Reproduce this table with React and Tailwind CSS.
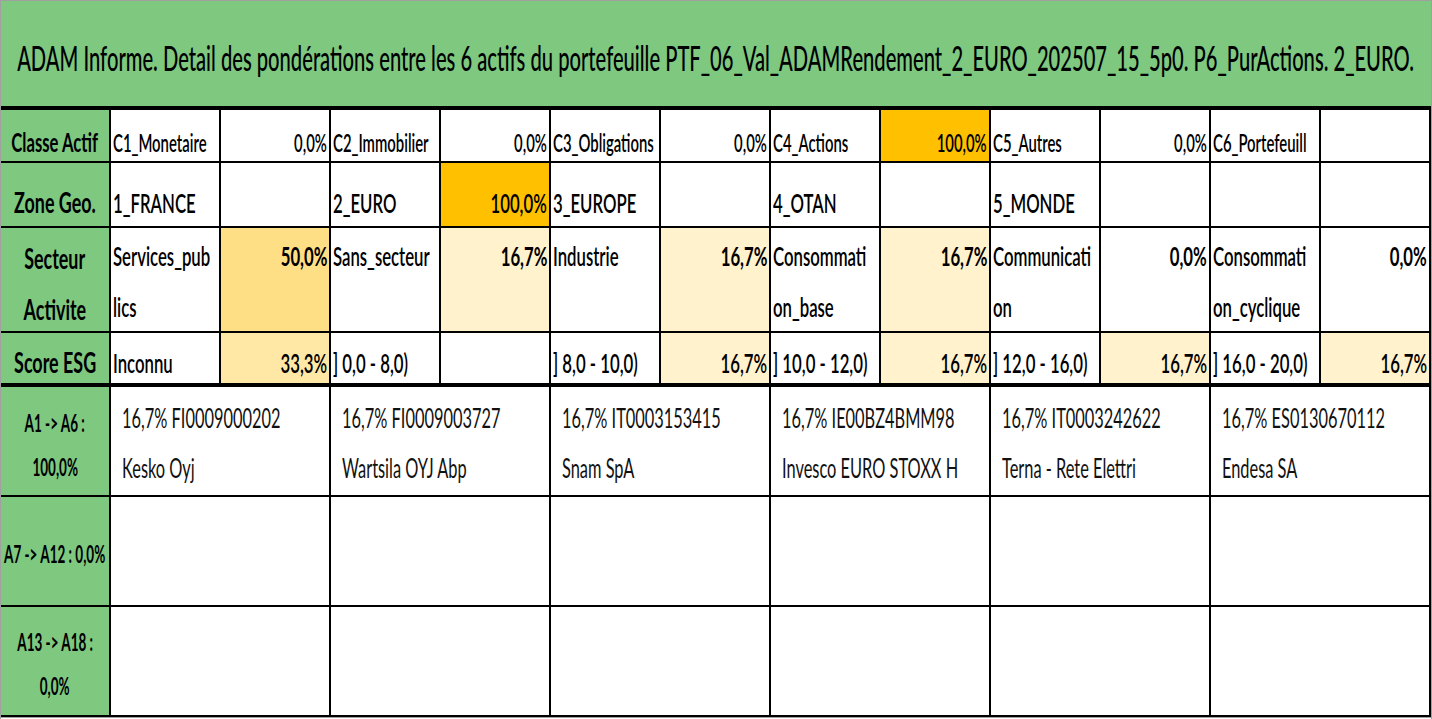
import React from "react";

const GREEN = "bg-[#7ec880]";

function T({ children, align = "left", sx = "scale-x-[0.62]", className = "" }) {
  const origin =
    align === "right" ? "origin-right" : align === "center" ? "origin-center" : "origin-left";
  return (
    <span className={`inline-block whitespace-nowrap ${sx} ${origin} ${className}`}>
      {children}
    </span>
  );
}

const classes = [
  ["C1_Monetaire", "0,0%", ""],
  ["C2_Immobilier", "0,0%", ""],
  ["C3_Obligations", "0,0%", ""],
  ["C4_Actions", "100,0%", "bg-[#ffc000]"],
  ["C5_Autres", "0,0%", ""],
  ["C6_Portefeuill", "", ""],
];

const zones = [
  ["1_FRANCE", "", ""],
  ["2_EURO", "100,0%", "bg-[#ffc000]"],
  ["3_EUROPE", "", ""],
  ["4_OTAN", "", ""],
  ["5_MONDE", "", ""],
  ["", "", ""],
];

const secteurs = [
  [["Services_pub", "lics"], "50,0%", "bg-[#ffdf85]"],
  [["Sans_secteur"], "16,7%", "bg-[#fff2cd]"],
  [["Industrie"], "16,7%", "bg-[#fff2cd]"],
  [["Consommati", "on_base"], "16,7%", "bg-[#fff2cd]"],
  [["Communicati", "on"], "0,0%", ""],
  [["Consommati", "on_cyclique"], "0,0%", ""],
];

const scores = [
  ["Inconnu", "33,3%", "bg-[#ffe8a6]"],
  ["] 0,0 - 8,0)", "", ""],
  ["] 8,0 - 10,0)", "16,7%", "bg-[#fff2cd]"],
  ["] 10,0 - 12,0)", "16,7%", "bg-[#fff2cd]"],
  ["] 12,0 - 16,0)", "16,7%", "bg-[#fff2cd]"],
  ["] 16,0 - 20,0)", "16,7%", "bg-[#fff2cd]"],
];

const actifs = [
  ["16,7% FI0009000202", "Kesko Oyj"],
  ["16,7% FI0009003727", "Wartsila OYJ Abp"],
  ["16,7% IT0003153415", "Snam SpA"],
  ["16,7% IE00BZ4BMM98", "Invesco EURO STOXX H"],
  ["16,7% IT0003242622", "Terna - Rete Elettri"],
  ["16,7% ES0130670112", "Endesa SA"],
];

function Label({ lines, className = "", sx = "scale-x-[0.64]" }) {
  return (
    <div
      className={`w-[110px] shrink-0 ${GREEN} border-r-2 border-black flex flex-col items-center font-bold text-black overflow-hidden ${className}`}
    >
      {lines.map((l) => (
        <T key={l} align="center" sx={sx}>
          {l}
        </T>
      ))}
    </div>
  );
}

function SimpleRow({ label, items, rowCls, cellCls, labelCls }) {
  return (
    <div className={`flex ${rowCls}`}>
      <Label lines={label} className={labelCls} />
      {items.map(([name, pct, bg], i) => (
        <React.Fragment key={i}>
          <div
            className={`w-[110px] shrink-0 border-r-2 border-black flex overflow-hidden pl-[2px] ${cellCls}`}
          >
            <T>{name}</T>
          </div>
          <div
            className={`w-[110px] shrink-0 border-r-2 border-black flex justify-end overflow-hidden pr-[2px] font-bold ${cellCls} ${bg}`}
          >
            <T align="right">{pct}</T>
          </div>
        </React.Fragment>
      ))}
    </div>
  );
}

export default function App() {
  return (
    <div className="w-[1432px] h-[719px] bg-white border-t border-l border-r border-[#a0a0a0] overflow-hidden font-['Lato','Liberation_Sans',sans-serif] text-black">
      <div
        className={`h-[109px] ${GREEN} border-b-4 border-black flex items-center justify-center pt-[8px] overflow-hidden`}
      >
        <T align="center" sx="scale-x-[0.576]" className="text-[35px] leading-none font-medium">
          ADAM Informe. Detail des pondérations entre les 6 actifs du portefeuille
          PTF_06_Val_ADAMRendement_2_EURO_202507_15_5p0. P6_PurActions. 2_EURO.
        </T>
      </div>

      <SimpleRow
        label={["Classe Actif"]}
        items={classes}
        rowCls="h-[53px] border-b-2 border-black"
        labelCls="justify-end pb-[6px] text-[26px] leading-none"
        cellCls="items-end pb-[6px] text-[24px] leading-none font-semibold"
      />
      <SimpleRow
        label={["Zone Geo."]}
        items={zones}
        rowCls="h-[65px] border-b-2 border-black"
        labelCls="justify-end pb-[10px] text-[28px] leading-none"
        cellCls="items-end pb-[10px] text-[27px] leading-none font-semibold"
      />

      <div className="flex h-[105px] border-b-2 border-black">
        <Label lines={["Secteur", "Activite"]} className="pt-[5px] text-[28px] leading-[51px]" />
        {secteurs.map(([names, pct, bg], i) => (
          <React.Fragment key={i}>
            <div className="w-[110px] shrink-0 border-r-2 border-black flex flex-col overflow-hidden pl-[2px] pt-[2px] text-[27px] leading-[51px] font-semibold">
              {names.map((n) => (
                <T key={n}>{n}</T>
              ))}
            </div>
            <div
              className={`w-[110px] shrink-0 border-r-2 border-black flex justify-end overflow-hidden pr-[2px] pt-[2px] text-[27px] leading-[51px] font-bold ${bg}`}
            >
              <T align="right">{pct}</T>
            </div>
          </React.Fragment>
        ))}
      </div>

      <SimpleRow
        label={["Score ESG"]}
        items={scores}
        rowCls="h-[54px] border-b-4 border-black"
        labelCls="justify-end pb-[7px] text-[28px] leading-none"
        cellCls="items-end pb-[7px] text-[27px] leading-none font-semibold"
      />

      <div className="flex h-[110px] border-b-2 border-black">
        <Label
          lines={["A1 -> A6 :", "100,0%"]}
          sx="scale-x-[0.54]"
          className="justify-center pt-[6px] text-[25px] leading-[44px]"
        />
        {actifs.map(([a, b], i) => (
          <div
            key={i}
            className="w-[220px] shrink-0 border-r-2 border-black flex flex-col overflow-hidden pl-[11px] pt-[6px] text-[26px] leading-[50px] text-[#111]"
          >
            <T sx="scale-x-[0.63]">{a}</T>
            <T sx="scale-x-[0.63]">{b}</T>
          </div>
        ))}
      </div>

      <div className="flex h-[110px] border-b-2 border-black">
        <Label
          lines={["A7 -> A12 : 0,0%"]}
          sx="scale-x-[0.54]"
          className="justify-center pt-[4px] text-[25px] leading-[44px]"
        />
        {actifs.map((_, i) => (
          <div key={i} className="w-[220px] shrink-0 border-r-2 border-black" />
        ))}
      </div>

      <div className="flex h-[110px] border-b-2 border-black">
        <Label
          lines={["A13 -> A18 :", "0,0%"]}
          sx="scale-x-[0.54]"
          className="justify-center pt-[4px] text-[25px] leading-[44px]"
        />
        {actifs.map((_, i) => (
          <div key={i} className="w-[220px] shrink-0 border-r-2 border-black" />
        ))}
      </div>
      <div className="h-px bg-[#a0a0a0]" />
    </div>
  );
}
